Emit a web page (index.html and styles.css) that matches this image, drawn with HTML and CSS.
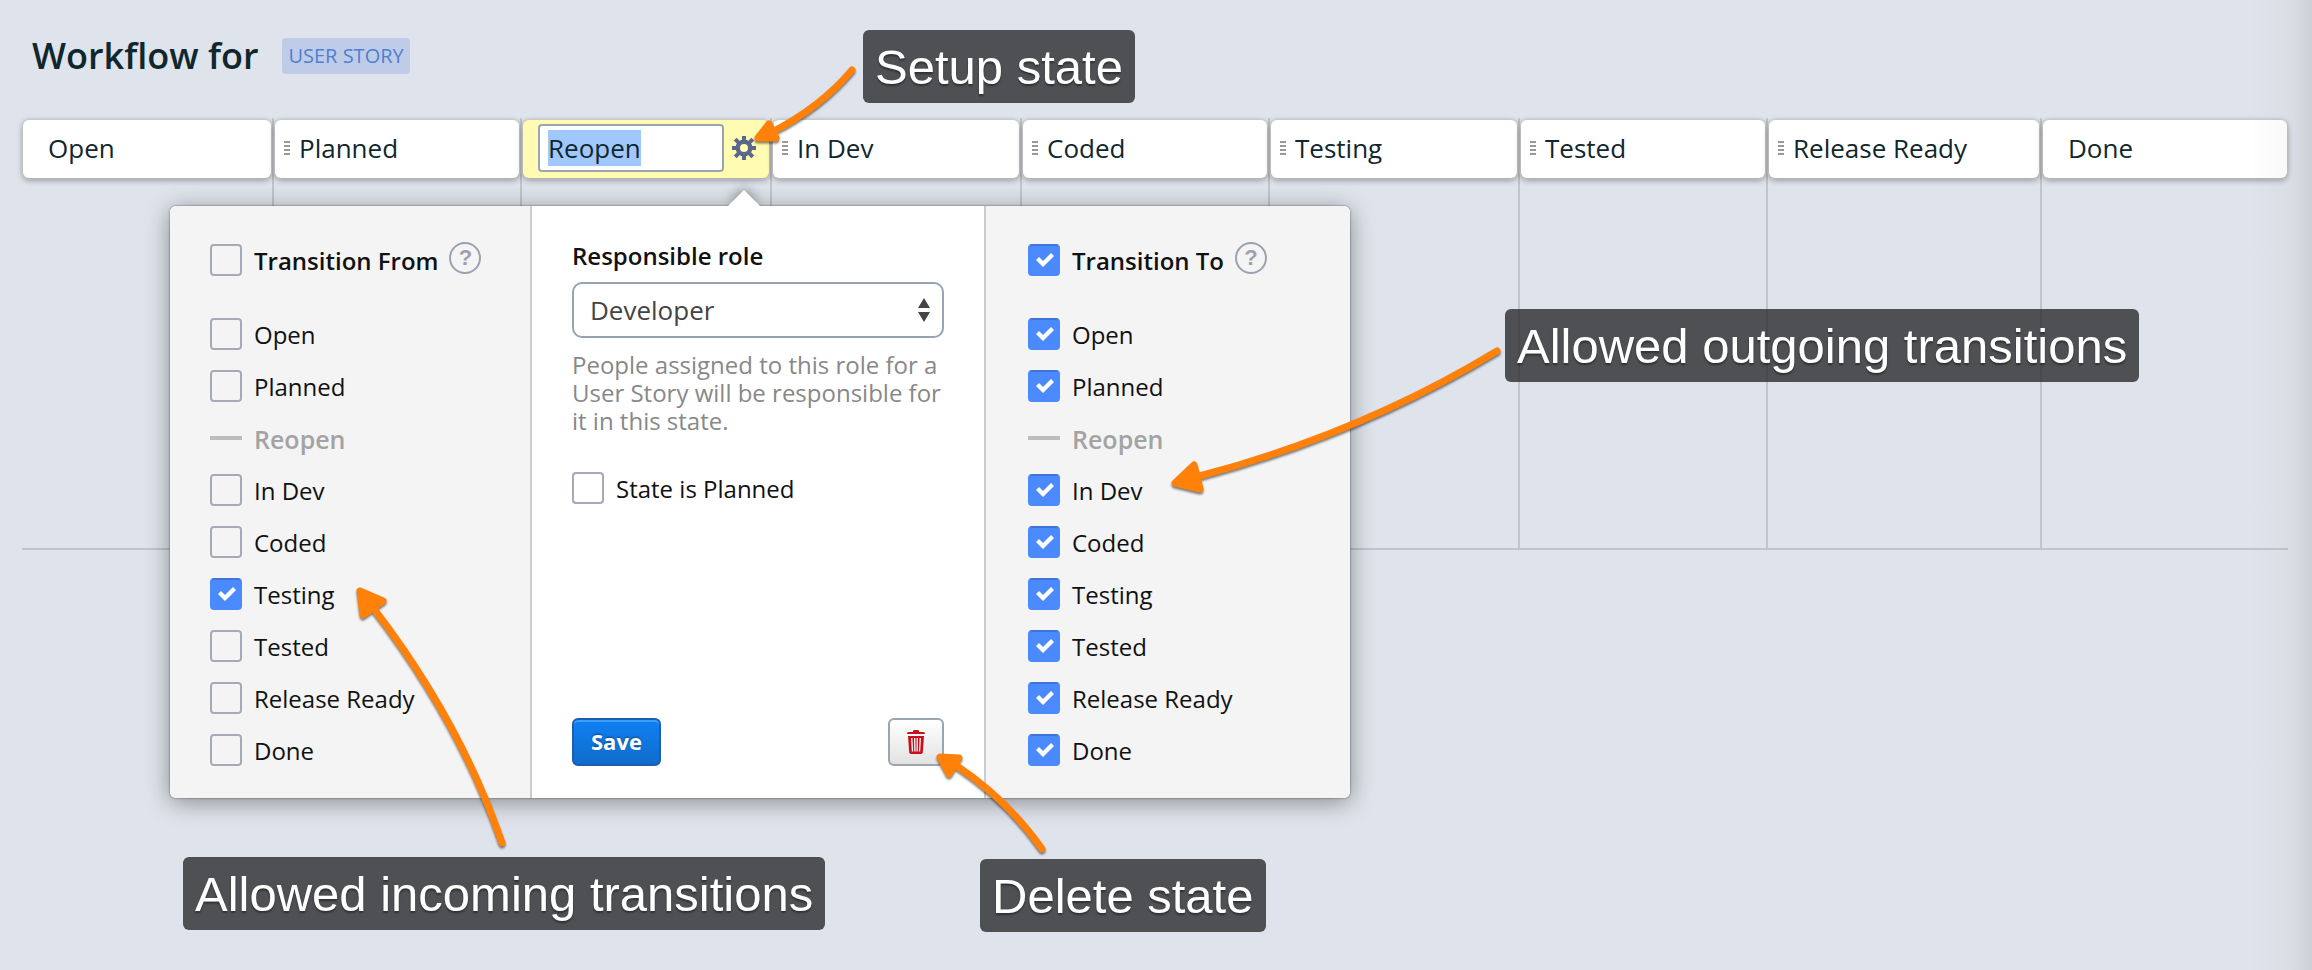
FILE: index.html
```html
<!DOCTYPE html>
<html lang="en">
<head>
<meta charset="utf-8">
<title>Workflow for User Story</title>
<link rel="stylesheet" href="styles.css">
</head>
<body>
<header class="page-header">
  <h1 class="page-title">Workflow for</h1>
  <span class="entity-tag">USER STORY</span>
</header>

<main class="board">
  <section class="column"><div class="card card-fixed">Open</div></section>
  <section class="column"><div class="card"><i class="grip"></i>Planned</div></section>
  <section class="column column-active">
    <div class="card card-editing">
      <input class="name-input" id="state-name" type="text" value="Reopen" aria-label="State name">
      <button class="gear-button" type="button" aria-label="Setup state">
        <svg width="24" height="24" viewBox="0 0 24 24" fill="none" stroke="#5b6788">
          <circle cx="12" cy="12" r="6.2" stroke-width="4.4"/>
          <path stroke-width="4" d="M12 0v5M12 19v5M0 12h5M19 12h5M3.2 3.2l3.6 3.6M17.2 17.2l3.6 3.6M3.2 20.8l3.6-3.6M17.2 6.8l3.6-3.6"/>
        </svg>
      </button>
    </div>
    <form class="popup">
      <div class="panel panel-side">
        <div class="panel-title">
          <label class="option"><input class="check" type="checkbox"><span>Transition From</span></label>
          <button class="help" type="button" aria-label="Help">?</button>
        </div>
        <ul class="options">
          <li><label class="option"><input class="check" type="checkbox"><span>Open</span></label></li>
          <li><label class="option"><input class="check" type="checkbox"><span>Planned</span></label></li>
          <li class="option option-self"><i class="dash"></i><span>Reopen</span></li>
          <li><label class="option"><input class="check" type="checkbox"><span>In Dev</span></label></li>
          <li><label class="option"><input class="check" type="checkbox"><span>Coded</span></label></li>
          <li><label class="option"><input class="check" type="checkbox" checked><span>Testing</span></label></li>
          <li><label class="option"><input class="check" type="checkbox"><span>Tested</span></label></li>
          <li><label class="option"><input class="check" type="checkbox"><span>Release Ready</span></label></li>
          <li><label class="option"><input class="check" type="checkbox"><span>Done</span></label></li>
        </ul>
      </div>
      <div class="panel panel-main">
        <label class="field-label" for="role">Responsible role</label>
        <div class="select-wrap">
          <select class="select" id="role"><option>Developer</option></select>
          <svg class="select-arrows" width="12" height="24" viewBox="0 0 12 24" fill="#444"><path d="M6 0l6 10H0zM6 24l6-10H0z"/></svg>
        </div>
        <p class="hint">People assigned to this role for a User Story will be responsible for it in this state.</p>
        <label class="option"><input class="check" type="checkbox"><span>State is Planned</span></label>
        <div class="actions">
          <button class="button button-save" type="button">Save</button>
          <button class="button button-delete" type="button" aria-label="Delete state">
            <svg width="18" height="24" viewBox="0 0 18 24">
              <path fill="#c8101c" d="M6 1.2Q6 0 7.200 0h3.600Q12 0 12 1.200V2h4.500Q18 2 18 4H0Q0 2 1.500 2H6z"/>
              <path fill="#c8101c" d="M1 6h16l-1.200 16.200Q15.600 24 14 24H4Q2.400 24 2.200 22.200z"/>
              <path stroke="#f0f0f0" stroke-width="1.400" d="M4.700 8l.8 13.500M7.700 8l.2 13.500M10.300 8l-.2 13.500M13.300 8l-.8 13.500"/>
            </svg>
          </button>
        </div>
      </div>
      <div class="panel panel-side">
        <div class="panel-title">
          <label class="option"><input class="check" type="checkbox" checked><span>Transition To</span></label>
          <button class="help" type="button" aria-label="Help">?</button>
        </div>
        <ul class="options">
          <li><label class="option"><input class="check" type="checkbox" checked><span>Open</span></label></li>
          <li><label class="option"><input class="check" type="checkbox" checked><span>Planned</span></label></li>
          <li class="option option-self"><i class="dash"></i><span>Reopen</span></li>
          <li><label class="option"><input class="check" type="checkbox" checked><span>In Dev</span></label></li>
          <li><label class="option"><input class="check" type="checkbox" checked><span>Coded</span></label></li>
          <li><label class="option"><input class="check" type="checkbox" checked><span>Testing</span></label></li>
          <li><label class="option"><input class="check" type="checkbox" checked><span>Tested</span></label></li>
          <li><label class="option"><input class="check" type="checkbox" checked><span>Release Ready</span></label></li>
          <li><label class="option"><input class="check" type="checkbox" checked><span>Done</span></label></li>
        </ul>
      </div>
    </form>
  </section>
  <section class="column"><div class="card"><i class="grip"></i>In Dev</div></section>
  <section class="column"><div class="card"><i class="grip"></i>Coded</div></section>
  <section class="column"><div class="card"><i class="grip"></i>Testing</div></section>
  <section class="column"><div class="card"><i class="grip"></i>Tested</div></section>
  <section class="column"><div class="card"><i class="grip"></i>Release Ready</div></section>
  <section class="column"><div class="card card-fixed">Done</div></section>
</main>

<div class="edge-shade"></div>

<svg class="arrows" width="2312" height="970" viewBox="0 0 2312 970">
  <g class="arrow"><path class="shaft" d="M852 70Q821 107 772 132"/><path class="head" d="M758 138l11-14 7 14z"/></g>
  <g class="arrow"><path class="shaft" d="M502 843Q460 721 374 609"/><path class="head" d="M360 591l23 10-20 14z"/></g>
  <g class="arrow"><path class="shaft" d="M1497 351Q1360 434 1196 477"/><path class="head" d="M1175 483l19-18 6 24z"/></g>
  <g class="arrow"><path class="shaft" d="M1042 849Q1007 799 954 764"/><path class="head" d="M940 757l19 1-10 16z"/></g>
</svg>
<div class="callout callout-setup">Setup state</div>
<div class="callout callout-outgoing">Allowed outgoing transitions</div>
<div class="callout callout-incoming">Allowed incoming transitions</div>
<div class="callout callout-delete">Delete state</div>

<script>
  const nameInput = document.getElementById('state-name');
  nameInput.focus();
  nameInput.select();
</script>
</body>
</html>
```
FILE: styles.css
```css
* {
  box-sizing: border-box;
}

body {
  position: relative;
  min-height: 100vh;
  margin: 0;
  padding: 0 24px 0 22px;
  overflow-x: hidden;
  background: #dfe3eb;
  color: #10272d;
  font: 26px/36px "Open Sans", "Noto Sans", sans-serif;
}

button,
input,
select {
  margin: 0;
  font: inherit;
}

/* Header */
.page-header {
  display: flex;
  align-items: center;
  gap: 24px;
  height: 118px;
  padding: 0 10px 6px;
}

.page-title {
  margin: 0;
  font-size: 36px;
  font-weight: 600;
}

.entity-tag {
  padding: 0 6px;
  border-radius: 4px;
  background: #bfcce7;
  color: #4f7fd2;
  font-size: 20px;
}

/* Board */
.board {
  display: grid;
  grid-template-columns: 252fr 248fr 250fr 250fr 248fr 250fr 248fr 274fr 246fr;
  border-bottom: 2px solid #c0c4cd;
}

.column {
  position: relative;
  min-width: 0;
  height: 430px;
  padding: 2px 1px 0;
  border-right: 2px solid #c0c4cd;
}

.column:last-child {
  border-right: 0;
}

.card {
  display: flex;
  align-items: center;
  gap: 9px;
  height: 58px;
  padding: 0 9px 2px;
  border-radius: 6px;
  background: #fff;
  box-shadow: 0 0 0 2px rgba(200, 200, 196, 0.4), 0 2px 6px rgba(0, 0, 0, 0.4);
  white-space: nowrap;
}

.card-fixed {
  padding: 0 25px 2px;
}

.card-editing {
  gap: 8px;
  padding: 0 13px 2px 15px;
  background: #fffbb3;
}

.grip {
  flex: none;
  width: 6px;
  height: 14px;
  background: repeating-linear-gradient(#999 0 2px, transparent 2px 4px);
}

.name-input {
  flex: 1;
  min-width: 0;
  height: 48px;
  padding: 0 8px;
  border: 2px solid #9aa5b2;
  border-radius: 4px;
  outline: 0;
  background: #fff;
  color: #10272d;
}

.name-input::selection {
  background: #a0c8ff;
  color: #10272d;
}

.gear-button {
  display: flex;
  padding: 0;
  border: 0;
  background: none;
}

/* State popup */
.popup {
  position: absolute;
  z-index: 2;
  top: 88px;
  right: -580px;
  display: grid;
  grid-template-columns: 360px 456px 364px;
  border-radius: 6px;
  background: #fff;
  box-shadow: 0 0 2px rgba(0, 0, 0, 0.6), 0 4px 24px rgba(0, 0, 0, 0.4);
  color: #111;
  font-size: 24px;
  line-height: 32px;
}

.popup::before {
  content: "";
  position: absolute;
  top: -16px;
  left: 558px;
  border: 16px solid transparent;
  border-top: 0;
  border-bottom-color: #fff;
  filter: drop-shadow(0 -2px 6px rgba(0, 0, 0, 0.4));
}

.panel {
  position: relative;
  padding: 36px 40px 32px;
}

.panel-side {
  padding-right: 16px;
  background: #f4f4f4;
}

.panel-side:first-child {
  border-radius: 6px 0 0 6px;
}

.panel-side:last-child {
  padding-left: 42px;
  border-radius: 0 6px 6px 0;
}

.panel-main {
  display: flex;
  flex-direction: column;
  border: solid #ccc;
  border-width: 0 2px;
  padding: 34px 40px 32px;
  background: #fff;
}

.panel-title {
  display: flex;
  align-items: center;
  gap: 11px;
  height: 36px;
  margin-bottom: 38px;
  font-weight: 600;
}

.option {
  display: flex;
  align-items: center;
  gap: 12px;
  height: 32px;
  white-space: nowrap;
}

.panel-title .option {
  margin-top: 4px;
}

.option span {
  padding-top: 2px;
}

.options {
  display: grid;
  gap: 20px;
  margin: 0;
  padding: 0;
  list-style: none;
}

.option-self {
  color: #a3a3a3;
  font-size: 25px;
  font-weight: 600;
}

.dash {
  width: 32px;
  height: 4px;
  background: #bcbcbc;
}

.check {
  flex: none;
  width: 32px;
  height: 32px;
  border: 2px solid #a5a9b8;
  border-radius: 4px;
  appearance: none;
}

.check:checked {
  border-color: #3f74dc #4a8afc #4a8afc;
  background: #4a8afc;
}

.check:checked::before {
  content: "";
  display: block;
  width: 28px;
  height: 28px;
  background: #fff;
  clip-path: polygon(6px 14px, 9px 11px, 13px 15px, 21px 7px, 24px 10px, 13px 21px);
}

.help {
  width: 32px;
  height: 32px;
  padding: 0;
  border: 2px solid #9ba1b0;
  border-radius: 50%;
  background: none;
  color: #9ba1b0;
  font: bold 22px/28px "Liberation Sans", Arial, sans-serif;
}

.panel-title {
  align-items: flex-start;
}

.panel-title .option {
  margin-top: 2px;
}

.panel-title {
  margin-bottom: 40px;
}

.field-label {
  margin-bottom: 10px;
  font-weight: 600;
}

.select-wrap {
  position: relative;
}

.select {
  width: 100%;
  height: 56px;
  padding: 0 40px 0 16px;
  border: 2px solid #98a4b1;
  border-radius: 10px;
  appearance: none;
  background: #fff;
  color: #444;
  font-size: 26px;
}

.select-arrows {
  position: absolute;
  top: 16px;
  right: 14px;
  pointer-events: none;
}

.hint {
  margin: 13px 0 37px;
  color: #888;
  line-height: 28px;
}

.actions {
  display: flex;
  justify-content: space-between;
  margin-top: auto;
}

.button {
  display: flex;
  align-items: center;
  justify-content: center;
  height: 48px;
  padding: 0 17px;
  border: 2px solid #9aa5b0;
  border-radius: 6px;
}

.button-save {
  padding-bottom: 2px;
  border-color: #1c5fb0;
  background: linear-gradient(#1080f4, #0f6ccb);
  box-shadow: inset 0 2px #3d9df8;
  color: #fff;
  font-size: 22px;
  font-weight: 700;
  text-shadow: 0 -1px 2px rgba(0, 0, 0, 0.4);
}

.button-delete {
  background: linear-gradient(#fff, #e2e2e2);
}

/* Right-hand scroll shade */
.edge-shade {
  position: absolute;
  top: 0;
  right: 0;
  bottom: 0;
  width: 62px;
  background: linear-gradient(90deg, rgba(120, 125, 125, 0), rgba(120, 125, 125, 0.05) 65%, rgba(120, 125, 125, 0.18));
  pointer-events: none;
}

/* Annotations */
.arrows {
  position: absolute;
  z-index: 3;
  top: 0;
  left: 0;
  pointer-events: none;
}

.arrow {
  filter: drop-shadow(0 2px 1px rgba(0, 0, 0, 0.5));
}

.shaft {
  fill: none;
  stroke: #ff810a;
  stroke-width: 7px;
  stroke-linecap: round;
}

.head {
  fill: #ff810a;
  stroke: #ff810a;
  stroke-width: 7px;
  stroke-linejoin: round;
}

.callout {
  position: absolute;
  z-index: 3;
  padding: 9px 12px 8px;
  border-radius: 6px;
  background: rgba(42, 42, 45, 0.8);
  color: #fff;
  font: 49px/56px "Liberation Sans", Arial, sans-serif;
  text-shadow: 0 2px 2px rgba(0, 0, 0, 0.4);
  white-space: nowrap;
}

.callout-setup {
  top: 30px;
  left: 863px;
}

.callout-outgoing {
  top: 309px;
  left: 1505px;
}

.callout-incoming {
  top: 857px;
  left: 183px;
}

.callout-delete {
  top: 859px;
  left: 980px;
}
```
